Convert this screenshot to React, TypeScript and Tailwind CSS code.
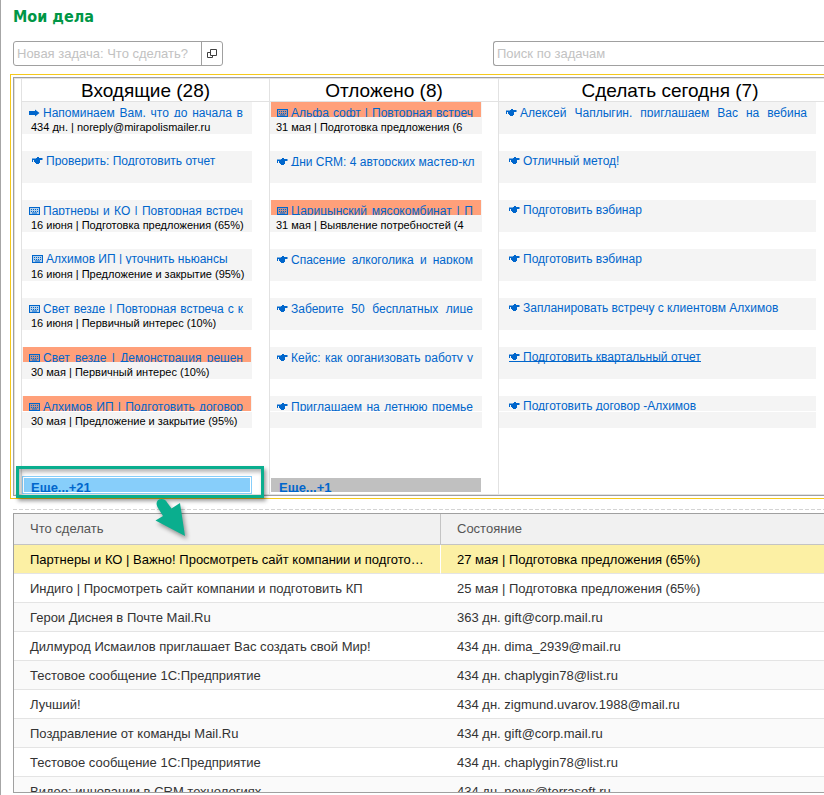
import React from "react";

type Icon = "arrow" | "hand" | "keyboard";

interface Task {
  icon: Icon;
  title: string;
  sub?: string;
  overdue?: boolean;
  short?: boolean;
  active?: boolean;
}

interface Column {
  title: string;
  tasks: Task[];
  more?: string;
  selected?: boolean;
  roomy?: boolean;
  width: string;
  header: string;
  card: string;
  sub: string;
}

const columns: Column[] = [
  {
    title: "Входящие (28)",
    width: "w-[248px] shrink-0",
    header: "",
    card: "mr-[17px]",
    sub: "pl-[9px]",
    more: "Еще...+21",
    selected: true,
    tasks: [
      { icon: "arrow", title: "Напоминаем Вам, что до начала в", sub: "434 дн. | noreply@mirapolismailer.ru" },
      { icon: "hand", title: "Проверить: Подготовить отчет", short: true },
      { icon: "keyboard", title: "Партнеры и КО | Повторная встреч", sub: "16 июня | Подготовка предложения (65%)" },
      { icon: "keyboard", title: "Алхимов ИП | уточнить ньюансы", sub: "16 июня | Предложение и закрытие (95%)", short: true },
      { icon: "keyboard", title: "Свет везде | Повторная встреча с к", sub: "16 июня | Первичный интерес (10%)" },
      { icon: "keyboard", title: "Свет везде | Демонстрация решен", sub: "30 мая | Первичный интерес (10%)", overdue: true },
      { icon: "keyboard", title: "Алхимов ИП | Подготовить договор", sub: "30 мая | Предложение и закрытие (95%)", overdue: true },
    ],
  },
  {
    title: "Отложено (8)",
    width: "w-[229px] shrink-0",
    header: "",
    card: "mr-4",
    sub: "pl-[6px]",
    more: "Еще...+1",
    tasks: [
      { icon: "keyboard", title: "Альфа софт | Повторная встреч", sub: "31 мая | Подготовка предложения (6", overdue: true },
      { icon: "hand", title: "Дни CRM: 4 авторских мастер-кл" },
      { icon: "keyboard", title: "Царицынский мясокомбинат | П", sub: "31 мая | Выявление потребностей (4", overdue: true },
      { icon: "hand", title: "Спасение алкоголика и нарком" },
      { icon: "hand", title: "Заберите 50 бесплатных лице" },
      { icon: "hand", title: "Кейс: как организовать работу у" },
      { icon: "hand", title: "Приглашаем на летнюю премье" },
    ],
  },
  {
    title: "Сделать сегодня (7)",
    width: "min-w-0 flex-1",
    header: "pl-[17px]",
    card: "mr-2",
    sub: "pl-[6px]",
    roomy: true,
    tasks: [
      { icon: "hand", title: "Алексей Чаплыгин, приглашаем Вас на вебина" },
      { icon: "hand", title: "Отличный метод!", short: true },
      { icon: "hand", title: "Подготовить вэбинар", short: true },
      { icon: "hand", title: "Подготовить вэбинар", short: true },
      { icon: "hand", title: "Запланировать встречу с клиентовм Алхимов", short: true },
      { icon: "hand", title: "Подготовить квартальный отчет", short: true, active: true },
      { icon: "hand", title: "Подготовить договор -Алхимов", short: true },
    ],
  },
];

const rows: [string, string][] = [
  ["Партнеры и КО | Важно! Просмотреть сайт компании и подготовить КП", "27 мая | Подготовка предложения (65%)"],
  ["Индиго | Просмотреть сайт компании и подготовить КП", "25 мая | Подготовка предложения (65%)"],
  ["Герои Диснея в Почте Mail.Ru", "363 дн. gift@corp.mail.ru"],
  ["Дилмурод Исмаилов приглашает Вас создать свой Мир!", "434 дн. dima_2939@mail.ru"],
  ["Тестовое сообщение 1С:Предприятие", "434 дн. chaplygin78@list.ru"],
  ["Лучший!", "434 дн. zigmund.uvarov.1988@mail.ru"],
  ["Поздравление от команды Mail.Ru", "434 дн. gift@corp.mail.ru"],
  ["Тестовое сообщение 1С:Предприятие", "434 дн. chaplygin78@list.ru"],
  ["Видео: инновации в CRM технологиях", "434 дн. news@terrasoft.ru"],
];

function TaskIcon({ icon }: { icon: Icon }) {
  if (icon === "arrow") {
    return (
      <svg width="11" height="8" viewBox="0 0 11 8" className="shrink-0" aria-hidden="true">
        <path d="M0 2h6V0.500L10.500 4 6 7.500V6H0z" fill="currentColor" />
      </svg>
    );
  }
  if (icon === "hand") {
    return (
      <svg width="11" height="8" viewBox="0 0 11 8" className="shrink-0" aria-hidden="true">
        <path d="M0 1.500h4V1h1V0h2v1h3.500v2H8v3H7v1H4V6H3V5H2V3H1v2H0z" fill="currentColor" />
      </svg>
    );
  }
  return (
    <svg width="12" height="8" viewBox="0 0 12 8" className="shrink-0" aria-hidden="true">
      <rect x="0.500" y="0.500" width="10" height="7" fill="currentColor" fillOpacity="0.250" stroke="currentColor" />
      <path d="M2 2.500h7M2 4.500h7" stroke="currentColor" strokeDasharray="1 1" />
      <path d="M3 6h5" stroke="currentColor" />
    </svg>
  );
}

function Card({ task, col, last }: { task: Task; col: Column; last: boolean }) {
  const tall = col.roomy && task.short && !last;
  const line = task.short ? "h-5 leading-5" : "h-[22px] leading-[22px]";
  return (
    <li className={`h-8 ${last ? "" : "mb-[17px]"} ${col.card}`}>
      <div className={`overflow-hidden bg-[#f4f4f4] ${tall ? "h-[17px]" : "h-[15px]"} ${task.overdue ? "px-px" : ""}`}>
        <a
          href="#"
          className={`flex h-full gap-[2px] overflow-hidden text-[12px] whitespace-nowrap text-[#0066cc] ${
            task.overdue ? "bg-[#ffa07a] pl-[6px]" : task.short ? "pl-[10px]" : "pl-[7px]"
          } ${task.overdue ? "pr-2" : "pr-[9px]"}`}
        >
          <span
            className={`flex w-[12px] shrink-0 items-center ${line} ${task.active ? "bg-[linear-gradient(#0066cc,#0066cc)] bg-[length:14px_1px] bg-[position:0_14px] bg-no-repeat -mr-[2px] w-[14px]" : ""}`}
          >
            <TaskIcon icon={task.icon} />
          </span>
          <span
            className={`${line} ${task.short ? "" : "flex-1 [text-align-last:justify]"} ${
              task.active ? "bg-[linear-gradient(#0066cc,#0066cc)] bg-[length:100%_1px] bg-[position:0_14px] bg-no-repeat" : ""
            }`}
          >
            {task.title}
          </span>
        </a>
      </div>
      <p
        className={`overflow-hidden bg-[#f4f4f4] text-[11px] whitespace-nowrap text-black ${col.sub} ${
          last ? "mt-px h-4 leading-[19px]" : tall ? "h-[15px]" : "h-[17px] leading-5"
        }`}
      >
        {task.sub}
      </p>
    </li>
  );
}

function BoardColumn({ col }: { col: Column }) {
  return (
    <section className={`flex flex-col border-l border-[#e2e2e2] ${col.width}`}>
      <h2 className={`h-[23px] border-b border-[#e2e2e2] text-center text-[19px] leading-6 whitespace-nowrap text-black ${col.header}`}>
        {col.title}
      </h2>
      <ul>
        {col.tasks.map((t, i) => (
          <Card key={i} task={t} col={col} last={i === col.tasks.length - 1} />
        ))}
      </ul>
      {col.more && (
        <a
          href="#"
          className={`mt-12 block h-[18px] border ${col.card} ${
            col.selected ? "border-[#87cefa] p-px" : "border-transparent py-px"
          }`}
        >
          <span
            className={`block h-[14px] overflow-hidden text-[13px] leading-5 font-bold text-[#0066cc] ${
              col.selected ? "bg-[#87cefa] pl-[7px]" : "bg-[#c0c0c0] pl-2"
            }`}
          >
            {col.more}
          </span>
        </a>
      )}
    </section>
  );
}

export default function App() {
  return (
    <main
      className="flex h-screen flex-col overflow-hidden border-l border-[#a6a6a6] bg-white pb-[2px] pl-[9px]"
      style={{ fontFamily: '"Liberation Sans", Arial, sans-serif' }}
    >
      <h1 className="mt-1 ml-[3px] h-6 font-['DejaVu_Sans_Condensed','DejaVu_Sans',sans-serif] text-[16px] leading-[26px] font-bold text-[#009646]">
        Мои дела
      </h1>

      <div className="mt-[13px] ml-[3px] flex justify-between gap-4">
        <div className="flex h-[25px] w-[210px] overflow-hidden rounded-[3px] border border-[#a0a0a0]">
          <input
            aria-label="Новая задача"
            placeholder="Новая задача: Что сделать?"
            className="w-[188px] border-r border-[#a0a0a0] px-[3px] text-[13px] outline-none placeholder:text-[#c2c2c2]"
          />
          <button aria-label="Открыть" className="flex flex-1 items-center justify-center text-[#404040]">
            <svg width="10" height="10" viewBox="0 0 10 10" fill="none" stroke="currentColor" aria-hidden="true">
              <path d="M3.500 0.500h6v6h-6zM3.500 3.500h-3v5h5v-2" />
            </svg>
          </button>
        </div>
        <input
          type="search"
          aria-label="Поиск по задачам"
          placeholder="Поиск по задачам"
          className="h-[25px] w-[331px] rounded-l-[3px] border border-r-0 border-[#a0a0a0] px-[3px] text-[13px] outline-none placeholder:text-[#c2c2c2]"
        />
      </div>

      <div className="relative mt-2 shrink-0 border border-r-0 border-[#f5c91c] py-[2px] pl-[2px]">
        <div className="flex h-[419px] border border-r-0 border-[#a0a0a0]">
          <div className="flex flex-1 border-y border-l border-[#e2e2e2] pl-[6px]">
            {columns.map((c) => (
              <BoardColumn key={c.title} col={c} />
            ))}
          </div>
        </div>

        <div className="absolute bottom-0 left-[5px] z-10 h-8 w-[248px] border-[3px] border-[#0aae8e] shadow-[2px_3px_4px_rgba(0,0,0,0.4),inset_2px_3px_4px_rgba(0,0,0,0.3)]" />
        <svg
          className="absolute top-[422px] left-[139px] z-10 drop-shadow-[2px_3px_2px_rgba(0,0,0,0.4)]"
          width="40"
          height="44"
          viewBox="0 0 40 44"
          aria-hidden="true"
        >
          <path d="M8 11C5 6 7 2 11.500 2C14.500 2 16 3.500 17.500 6L21.500 11.500 30 6 35 39 5.500 23.500 13 19z" fill="#0aae8e" />
        </svg>
      </div>

      <div className="mt-[10px] ml-[3px] h-px shrink-0 bg-[repeating-linear-gradient(90deg,#d4d4d4_0_4px,transparent_4px_6px)]" />

      <div className="mt-[3px] ml-[3px] min-h-0 flex-1 overflow-hidden border border-r-0 border-[#a0a0a0]">
        <table className="w-full table-fixed border-separate border-spacing-0 text-[13px] text-[#333]">
          <thead>
            <tr className="h-[31px] bg-[#f1f1f1] text-left text-[#555]">
              <th className="w-[427px] border-r border-b border-[#c4c4c4] py-0 pl-4 font-normal">Что сделать</th>
              <th className="border-b border-[#c4c4c4] py-0 pl-4 font-normal">Состояние</th>
            </tr>
          </thead>
          <tbody>
            {rows.map(([what, state], i) => (
              <tr
                key={i}
                className={`h-[29px] ${
                  i === 0 ? "bg-[#fcf0a4] text-black" : i % 2 === 0 ? "bg-[#fafafa]" : "bg-white"
                }`}
              >
                <td
                  className={`truncate border-b border-b-[#e4e4e4] pt-[2px] pr-4 pb-0 pl-4 ${
                    i === 0 ? "border-r border-r-white" : ""
                  }`}
                >
                  {what}
                </td>
                <td className="truncate border-b border-b-[#e4e4e4] pt-[2px] pb-0 pl-4">{state}</td>
              </tr>
            ))}
          </tbody>
        </table>
      </div>
    </main>
  );
}
